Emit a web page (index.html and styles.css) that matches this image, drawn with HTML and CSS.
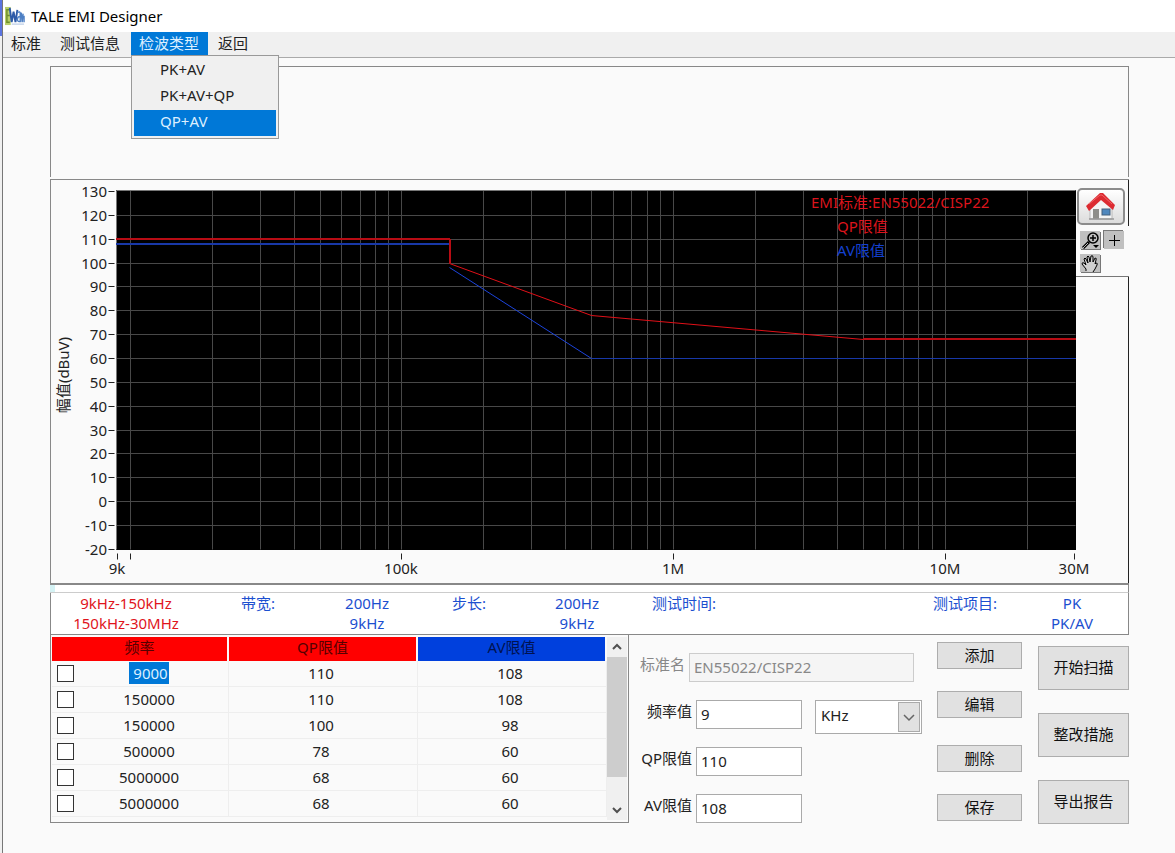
FILE: index.html
```html
<!DOCTYPE html>
<html lang="zh-CN">
<head>
<meta charset="utf-8">
<title>TALE EMI Designer</title>
<link rel="stylesheet" href="styles.css">
</head>
<body>
<div class="window">
  <header class="titlebar">
    <svg class="logo" viewBox="0 0 21 21" aria-hidden="true">
      <rect x="0" y="1" width="6" height="19" fill="#b9cf6a"/>
      <path d="M5 4H2v13h3M2 10h3" fill="none" stroke="#6f8f2c" stroke-width="1.5"/>
      <path d="M5 2l2 15 2-11 2 11 2-13" fill="none" stroke="#2d5aa8" stroke-width="2"/>
      <path d="M13 7q3-2 3 1v9M16 11q-3 0-3 3t3 2M17 7l1 10 1-9M19 11h1v6" fill="none" stroke="#4d7fc4" stroke-width="1.500"/>
      <path d="M7 19h13" stroke="#a9bfdf" stroke-width="1"/>
    </svg>
    <h1 class="title">TALE EMI Designer</h1>
  </header>

  <nav class="menubar">
    <button class="menu-item" type="button">标准</button>
    <button class="menu-item" type="button">测试信息</button>
    <div class="menu-group">
      <button class="menu-item active" type="button" aria-expanded="true">检波类型</button>
      <div class="dropdown">
        <button class="option" type="button">PK+AV</button>
        <button class="option" type="button">PK+AV+QP</button>
        <button class="option active" type="button">QP+AV</button>
      </div>
    </div>
    <button class="menu-item" type="button">返回</button>
  </nav>

  <main class="content">
    <section class="blank-panel"></section>

    <section class="chart-panel">
      <svg class="chart" viewBox="0 -1 1025 403" role="img" aria-label="EMI限值曲线">
        <rect x="65" y="9" width="960" height="360" fill="#000"/>
        <g transform="translate(0.5 0.5)">
          <path class="grid" d="M79 9v359M161 9v359M209 9v359M243 9v359M269 9v359M290 9v359M309 9v359M324 9v359M337 9v359M350 9v359M432 9v359M480 9v359M514 9v359M540 9v359M562 9v359M580 9v359M596 9v359M609 9v359M622 9v359M704 9v359M752 9v359M786 9v359M812 9v359M834 9v359M852 9v359M867 9v359M881 9v359M894 9v359M976 9v359"/>
          <path class="grid" d="M65 34h959M398 58h626M65 82h959M65 105h959M65 129h959M65 153h959M65 177h475M65 201h959M65 225h959M65 249h959M65 272h959M65 296h959M65 320h959M65 344h959"/>
          <path class="frame" d="M65 368V9h959"/>
          <path class="limit-av" d="M398 86L540 177"/>
          <path class="limit-qp" d="M398 82L540 134L812 158"/>
          <path class="ticks" d="M57 10h6M57 34h6M57 58h6M57 82h6M57 105h6M57 129h6M57 153h6M57 177h6M57 201h6M57 225h6M57 249h6M57 272h6M57 296h6M57 320h6M57 344h6M57 368h6M66 372v6M79 372v6M350 372v6M622 372v6M894 372v6M1023 372v6"/>
        </g>
        <g class="level-av">
          <rect x="65" y="62" width="333" height="2"/>
          <rect x="540" y="177" width="485" height="1"/>
        </g>
        <g class="level-qp">
          <rect x="65" y="57" width="334" height="2"/>
          <rect x="398" y="58" width="2" height="25"/>
          <rect x="812" y="157" width="213" height="2"/>
        </g>
        <g class="y-labels">
          <text x="56" y="16">130</text><text x="56" y="40">120</text><text x="56" y="64">110</text><text x="56" y="88">100</text>
          <text x="56" y="111">90</text><text x="56" y="135">80</text><text x="56" y="159">70</text><text x="56" y="183">60</text>
          <text x="56" y="207">50</text><text x="56" y="231">40</text><text x="56" y="255">30</text><text x="56" y="278">20</text>
          <text x="56" y="302">10</text><text x="56" y="326">0</text><text x="56" y="350">-10</text><text x="56" y="374">-20</text>
        </g>
        <g class="x-labels">
          <text x="66" y="393">9k</text><text x="350" y="393">100k</text><text x="622" y="393">1M</text><text x="894" y="393">10M</text><text x="1023" y="393">30M</text>
        </g>
        <text class="axis-title" transform="translate(18 194) rotate(-90)">幅值(dBuV)</text>
        <g class="legend">
          <text class="legend-qp" x="760" y="27">EMI标准:EN55022/CISP22</text>
          <text class="legend-qp" x="786" y="51">QP限值</text>
          <text class="legend-av" x="786" y="75">AV限值</text>
        </g>
      </svg>
      <div class="side">
        <div class="side-home">
          <button class="home-button" type="button" aria-label="主页">
            <svg viewBox="0 0 32 30" width="32" height="30" aria-hidden="true">
              <path d="M5 13L16 5l11 9v13H5z" fill="#f4f4f4" stroke="#b8b8b8"/>
              <rect x="8" y="17" width="6" height="10" fill="#8e8e8a"/>
              <rect x="17" y="17" width="8" height="6" fill="#4f87bd" stroke="#45607c"/>
              <path d="M4 27h25" stroke="#999" stroke-width="1.500"/>
              <path d="M1 14L15 1h3l12 12-2 5L16 8 4 19z" fill="#dc2b31"/>
              <path d="M4 12L15 3h2l10 9" fill="none" stroke="#f06468"/>
            </svg>
          </button>
        </div>
        <div class="side-tools">
          <button class="tool" type="button" aria-label="缩放">
            <svg viewBox="0 0 20 18" width="20" height="18" aria-hidden="true">
              <circle cx="13" cy="7" r="5" fill="none" stroke="#000" stroke-width="1.500"/>
              <path d="M10 7h6M13 4v6" stroke="#000" stroke-width="1.500"/>
              <path d="M9 11l-6 6" stroke="#000" stroke-width="3"/>
              <path d="M8 12l-5 5" stroke="#bbb"/>
              <path d="M13 14h6l-3 3z"/>
            </svg>
          </button>
          <button class="tool pressed" type="button" aria-label="光标">
            <svg viewBox="0 0 20 18" width="20" height="18" aria-hidden="true">
              <path d="M5 9.500h11M10.500 4v11" stroke="#000"/>
            </svg>
          </button>
          <button class="tool" type="button" aria-label="平移">
            <svg viewBox="0 0 20 18" width="20" height="18" aria-hidden="true">
              <path d="M6 17v-2L2 10q0-2 2-1l2 2-2-6q1-2 2 0l2 4-1-6q1-2 2 0l1 5 1-6q2-1 2 1v5l2-4q2 0 1 2l-1 4 1-1q2 0 1 2l-2 4-2 3v1" fill="#d0d0d0" stroke="#000"/>
            </svg>
          </button>
        </div>
        <div class="side-rest"></div>
      </div>
    </section>

    <div class="progress-strip"><span class="progress-mark"></span></div>

    <section class="info">
      <div class="info-range">9kHz-150kHz<br>150kHz-30MHz</div>
      <div class="info-label indent-wide">带宽:</div>
      <div class="info-value">200Hz<br>9kHz</div>
      <div class="info-label indent-mid">步长:</div>
      <div class="info-value">200Hz<br>9kHz</div>
      <div class="info-label">测试时间:</div>
      <div class="info-label">测试项目:</div>
      <div class="info-value">PK<br>PK/AV</div>
    </section>

    <section class="bottom">
      <div class="table-panel">
        <table class="limits">
          <colgroup><col class="col-check"><col class="col-freq"><col class="col-limit"><col class="col-limit"></colgroup>
          <thead>
            <tr><th colspan="2">频率</th><th>QP限值</th><th class="th-av">AV限值</th></tr>
          </thead>
          <tbody>
            <tr><td class="check"><input type="checkbox" aria-label="9000"></td><td class="freq"><span class="selected">9000</span></td><td>110</td><td>108</td></tr>
            <tr><td class="check"><input type="checkbox" aria-label="150000 (110)"></td><td class="freq">150000</td><td>110</td><td>108</td></tr>
            <tr><td class="check"><input type="checkbox" aria-label="150000 (100)"></td><td class="freq">150000</td><td>100</td><td>98</td></tr>
            <tr><td class="check"><input type="checkbox" aria-label="500000"></td><td class="freq">500000</td><td>78</td><td>60</td></tr>
            <tr><td class="check"><input type="checkbox" aria-label="5000000 (1)"></td><td class="freq">5000000</td><td>68</td><td>60</td></tr>
            <tr><td class="check"><input type="checkbox" aria-label="5000000 (2)"></td><td class="freq">5000000</td><td>68</td><td>60</td></tr>
          </tbody>
        </table>
        <div class="scrollbar">
          <button class="scroll-button" type="button" aria-label="向上"><svg viewBox="0 0 20 20" width="20" height="20"><path d="M6 12l4-4 4 4" fill="none" stroke="#505050" stroke-width="2"/></svg></button>
          <div class="scroll-track"><div class="scroll-thumb"></div></div>
          <button class="scroll-button" type="button" aria-label="向下"><svg viewBox="0 0 20 20" width="20" height="20"><path d="M6 8l4 4 4-4" fill="none" stroke="#505050" stroke-width="2"/></svg></button>
        </div>
      </div>

      <form class="editor">
        <div class="field field-name">
          <label for="std">标准名</label>
          <input id="std" type="text" value="EN55022/CISP22" disabled>
        </div>
        <div class="field">
          <label for="freq">频率值</label>
          <input id="freq" type="text" value="9">
          <div class="unit">
            <select id="unit" aria-label="单位"><option>KHz</option><option>MHz</option></select>
            <span class="unit-arrow"><svg viewBox="0 0 20 28" width="20" height="28"><path d="M5 12l5 5 5-5" fill="none" stroke="#666" stroke-width="1.500"/></svg></span>
          </div>
        </div>
        <div class="field">
          <label for="qp">QP限值</label>
          <input id="qp" type="text" value="110">
        </div>
        <div class="field">
          <label for="av">AV限值</label>
          <input id="av" type="text" value="108">
        </div>
      </form>

      <div class="edit-buttons">
        <button class="button" type="button">添加</button>
        <button class="button" type="button">编辑</button>
        <button class="button apart" type="button">删除</button>
        <button class="button" type="button">保存</button>
      </div>
      <div class="action-buttons">
        <button class="button large" type="button">开始扫描</button>
        <button class="button large" type="button">整改措施</button>
        <button class="button large" type="button">导出报告</button>
      </div>
    </section>
  </main>
</div>
</body>
</html>
```

FILE: styles.css
```css
* {
  box-sizing: border-box;
}

body {
  margin: 0;
  min-height: 100vh;
  background: linear-gradient(#5b74e0 0 36px, #f0f0f0 36px);
  font: 15px/20px "Noto Sans", "Noto Sans CJK SC", sans-serif;
  color: #222;
}

button,
input,
select {
  font: inherit;
  color: inherit;
  border-radius: 0;
}

button {
  padding: 0;
  border: 0;
  background: none;
}

svg {
  display: block;
}

.window {
  min-height: 100vh;
  margin-left: 2px;
  border-left: 1px solid #777;
  background: #fafafa;
}

.titlebar {
  display: flex;
  align-items: center;
  gap: 6px;
  height: 32px;
  padding-left: 2px;
  background: #fff;
}

.logo {
  width: 20px;
  height: 20px;
}

.title {
  margin: 0;
  font-size: 15px;
  font-weight: 400;
  color: #000;
}

/* Menu bar */
.menubar {
  display: flex;
  align-items: flex-start;
  gap: 2px;
  height: 26px;
  background: #f0f0f0;
  border-bottom: 1px solid #aaa;
}

.menu-item {
  display: block;
  height: 23px;
  padding: 0 9px 2px 8px;
  line-height: 20px;
}

.menu-item.active,
.option.active {
  background: #0078d7;
  color: #dcefff;
}

.menu-group {
  position: relative;
}

.dropdown {
  position: absolute;
  z-index: 1;
  top: 100%;
  left: 0;
  width: 148px;
  padding: 2px;
  background: #f0f0f0;
  border: 1px solid #999;
}

.option {
  display: block;
  width: 100%;
  height: 26px;
  padding: 0 0 4px 26px;
  text-align: left;
}

/* Panels */
.content {
  padding: 8px 46px 30px 47px;
}

.blank-panel {
  height: 111px;
  margin-bottom: 2px;
  border: 1px solid #888;
  border-bottom: 0;
}

.chart-panel {
  display: flex;
  border: solid #888;
  border-width: 1px 0 2px 1px;
}

.chart {
  flex: 1;
  min-width: 0;
  overflow: visible;
  font-size: 15px;
  fill: #222;
}

.grid,
.ticks,
.frame,
.limit-qp,
.limit-av {
  fill: none;
}

.grid {
  stroke: #484848;
}

.frame {
  stroke: #777;
}

.ticks {
  stroke: #222;
}

.limit-qp {
  stroke: #e01018;
}

.limit-av {
  stroke: #1c44dc;
}

.level-qp {
  fill: #b80c14;
}

.level-av {
  fill: #1838a8;
}

.y-labels {
  text-anchor: end;
}

.x-labels,
.axis-title {
  text-anchor: middle;
}

.legend-qp {
  fill: #dc141c;
}

.legend-av {
  fill: #1440d0;
}

.side {
  display: flex;
  flex-direction: column;
  width: 53px;
}

.side-home {
  height: 46px;
  padding: 8px 0 0 1px;
  border-right: 1px solid #222;
}

.home-button {
  display: grid;
  place-items: center;
  width: 48px;
  height: 37px;
  border: 2px solid #8c8c8c;
  border-radius: 5px;
  background: linear-gradient(#fff, #dcdcdc);
}

.side-tools {
  display: grid;
  grid-template-columns: 20px 20px;
  grid-auto-rows: 18px;
  gap: 5px 4px;
  height: 51px;
  padding: 5px 4px;
  border-bottom: 1px solid #777;
}

.tool {
  background: #c0c0c0;
  box-shadow: 1px 1px 0 #777;
}

.tool.pressed {
  box-shadow: -1px -1px 0 #777;
}

.side-rest {
  flex: 1;
  border-right: 1px solid #222;
}

.progress-strip {
  display: flex;
  height: 8px;
  background: #fff;
  border: solid #888;
  border-width: 0 1px 0 0;
  border-bottom: 1px solid #ccc;
}

.progress-mark {
  width: 5px;
  background: #d4f2f4;
}

/* Measurement settings */
.info {
  display: grid;
  grid-template-columns: 150fr 116fr 100fr 110fr 100fr 281fr 108fr 112fr;
  height: 42px;
  background: #fff;
  border: 1px solid #888;
  border-top: 0;
  color: #1c4fd0;
}

.info-range,
.info-value {
  text-align: center;
}

.info-range {
  color: #e0141c;
}

.info-label {
  padding-left: 25px;
}

.info-label.indent-wide {
  padding-left: 40px;
}

.info-label.indent-mid {
  padding-left: 35px;
}

/* Lower area */
.bottom {
  display: flex;
  align-items: flex-start;
}

.table-panel {
  display: flex;
  flex: 1;
  justify-content: space-between;
  min-width: 0;
  height: 188px;
  padding: 2px 1px;
  border: solid #888;
  border-width: 0 1px 1px;
}

.limits {
  flex: 1;
  align-self: flex-start;
  width: 100%;
  table-layout: fixed;
  border-collapse: separate;
  border-spacing: 0;
}

.col-check {
  width: 22px;
}

.col-freq {
  width: 155px;
}

.limits th {
  height: 24px;
  padding: 0 0 4px;
  line-height: 20px;
  font-weight: 400;
  background: #f00;
  color: #500;
  border-right: 2px solid #fafafa;
}

.limits .th-av {
  background: #0040dd;
  color: #001250;
}

.limits td {
  height: 26px;
  padding: 0 4px 1px 0;
  text-align: center;
  border: solid #eee;
  border-width: 0 1px 1px 0;
}

.limits .check {
  padding-right: 0;
  border-right: 0;
}

.check input {
  display: block;
  appearance: none;
  width: 17px;
  height: 17px;
  margin: 0 0 0 5px;
  border: 1px solid #333;
  background: #fff;
}

.selected {
  display: inline-block;
  padding: 1px 1px 1px 4px;
  background: #0078d7;
  color: #dcefff;
}

.scrollbar {
  display: flex;
  flex-direction: column;
  flex: none;
  width: 20px;
  background: #f0f0f0;
}

.scroll-button {
  height: 20px;
}

.scroll-track {
  flex: 1;
}

.scroll-thumb {
  height: 84%;
  background: #cdcdcd;
}

.editor {
  display: grid;
  grid-auto-rows: 29px;
  row-gap: 18px;
  width: 308px;
  padding-top: 18px;
}

.field {
  display: flex;
  align-items: flex-start;
  gap: 4px;
}

.field label {
  width: 63px;
  line-height: 23px;
  text-align: right;
}

.field input {
  width: 106px;
  height: 29px;
  padding: 0 4px 2px;
  border: 1px solid #aaa;
  background: #fff;
}

.field-name {
  color: #888;
}

.field-name label {
  width: 56px;
}

.field-name input:disabled {
  width: 225px;
  border-color: #ccc;
  background: #f5f5f5;
}

.unit {
  display: flex;
  position: relative;
  margin-left: 9px;
}

.unit select {
  appearance: none;
  width: 107px;
  height: 34px;
  padding: 0 24px 4px 5px;
  border: 1px solid #aaa;
  background: #fff;
}

.unit-arrow {
  position: absolute;
  top: 2px;
  right: 2px;
  border: 1px solid #aaa;
  background: #e1e1e1;
  pointer-events: none;
}

.edit-buttons,
.action-buttons {
  display: flex;
  flex-direction: column;
}

.edit-buttons {
  gap: 22px;
  width: 85px;
  margin-right: 16px;
  padding-top: 7px;
}

.action-buttons {
  gap: 23px;
  width: 91px;
  padding-top: 11px;
}

.button {
  height: 27px;
  padding-bottom: 2px;
  border: 1px solid #adadad;
  background: #e1e1e1;
  color: #111;
}

.button.apart {
  margin-top: 5px;
}

.button.large {
  height: 44px;
}
```
